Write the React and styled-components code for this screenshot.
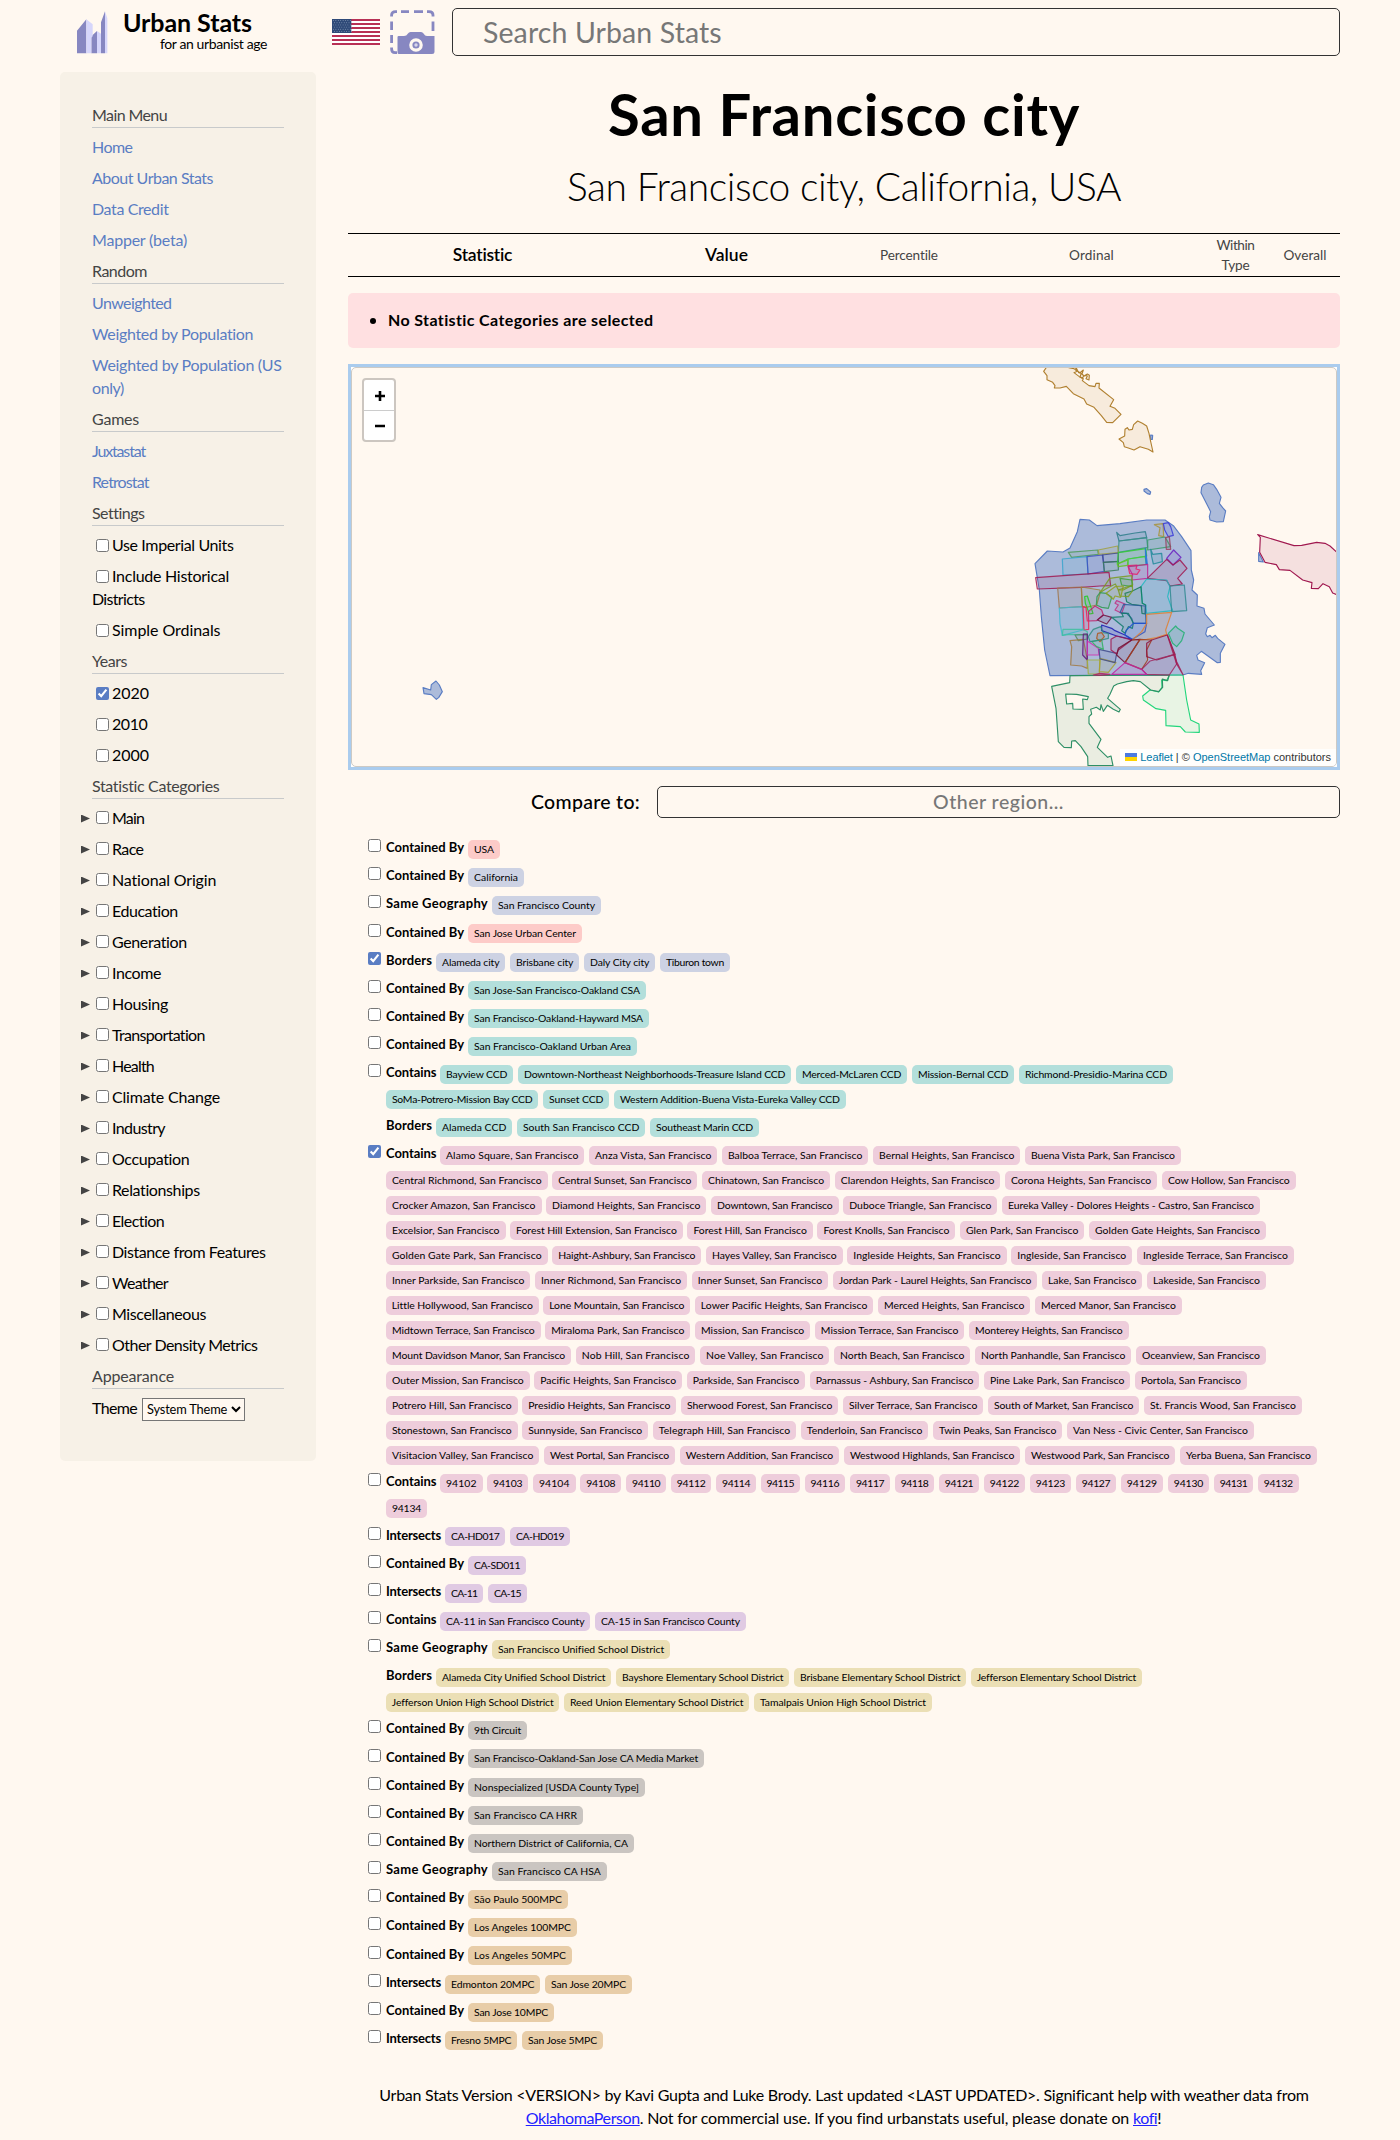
import React, { useLayoutEffect, useRef, useState } from "react";
import styled, { createGlobalStyle } from "styled-components";

const GlobalStyle = createGlobalStyle`
  * { box-sizing: border-box; }
  body {
    margin: 0;
    background: #fff8f0;
    color: #000;
    font-family: Lato, "Open Sans", sans-serif;
    font-size: 16px;
    line-height: 23px;
  }
`;

/* Text tracked so that it fills the given width. */
const Tracked = styled.span`
  display: inline-block;
  white-space: pre;
`;

function Fit({ w, children }) {
  const ref = useRef(null);
  const [spacing, setSpacing] = useState(0);
  useLayoutEffect(() => {
    const el = ref.current;
    el.style.letterSpacing = "0px";
    const natural = el.getBoundingClientRect().width;
    const next = (w - natural) / el.textContent.length;
    el.style.letterSpacing = `${next}px`;
    setSpacing(next);
  }, [w, children]);
  return (
    <Tracked ref={ref} style={{ letterSpacing: `${spacing}px` }}>
      {children}
    </Tracked>
  );
}

const Page = styled.div`
  width: 1280px;
  margin: 0 60px;
  height: 2140px;
  overflow: hidden;
`;

const Header = styled.header`
  display: flex;
  height: 72px;
  padding-top: 8px;
`;

const Brand = styled.div`
  display: flex;
  width: 272px;
  padding: 3px 0 0 16px;
`;

const BrandText = styled.div`
  display: flex;
  flex-direction: column;
  padding-left: 15px;
`;

const BrandName = styled.div`
  font-size: 25px;
  font-weight: 700;
  line-height: 24px;
  margin-top: -1px;
`;

const BrandTag = styled.div`
  font-size: 14px;
  line-height: 16px;
  padding: 2px 0 0 37px;
`;

const FlagBox = styled.div`
  width: 58px;
  padding-top: 11px;
`;

const CameraBox = styled.div`
  width: 62px;
  padding-top: 2px;
`;

const SearchInput = styled.input`
  width: 888px;
  height: 48px;
  border: 1px solid #333;
  border-radius: 5px;
  background: #fff8f0;
  padding: 0 30px;
  font: 400 28.5px Lato, sans-serif;
  letter-spacing: 0.1px;
  &::placeholder { color: #777; }
`;

const Body = styled.div`
  display: flex;
  gap: 32px;
  align-items: flex-start;
`;

const Sidebar = styled.nav`
  width: 256px;
  height: 1389px;
  padding: 27px 32px;
  border-radius: 5px;
  background: #f7f1e7;
`;

const MenuHeading = styled.div`
  margin: 4px 0 3px;
  height: 25px;
  border-bottom: 1px solid #c8cacb;
  color: #444;
`;

const MenuItem = styled.div`
  padding: 4px 0;
  color: ${(p) => (p.$link ? "#5a7dc3" : "#000")};
`;

const Check = styled.input.attrs({ type: "checkbox", readOnly: true })`
  width: 13px;
  height: 13px;
  margin: 3px 3px 3px 4px;
  vertical-align: -1px;
  accent-color: #5a7dc3;
`;

const CategoryRow = styled.div`
  display: flex;
  align-items: center;
  height: 31px;
  margin-left: -11px;
`;

const Triangle = styled.span`
  width: 9px;
  height: 8px;
  margin-right: 2px;
  margin-top: 2px;
  background: #444;
  clip-path: polygon(0 0, 100% 50%, 0 100%);
`;

const ThemeSelect = styled.select`
  width: 103px;
  height: 23px;
  margin-left: 5px;
  padding: 0;
  border: 1px solid #767676;
  border-radius: 0;
  background: #fff8f0;
  color: #000;
  font: 400 12.8px Lato, sans-serif;
  letter-spacing: -0.15px;
`;

const Main = styled.main`
  width: 992px;
`;

const Title = styled.h1`
  margin: 0;
  font-size: 58px;
  font-weight: 700;
  line-height: 83px;
  text-align: center;
`;

const Subtitle = styled.h2`
  margin: 0;
  font-size: 39px;
  font-weight: 300;
  line-height: 63px;
  text-align: center;
`;

const TableHead = styled.div`
  display: grid;
  grid-template-columns: 269px 219px 146px 219px 69px 70px;
  align-items: center;
  height: 44px;
  margin-top: 15px;
  border-top: 1px solid #000;
  border-bottom: 1px solid #000;
  text-align: center;
`;

const HeadCell = styled.div`
  font-size: ${(p) => (p.$major ? 17.5 : 13.6)}px;
  font-weight: ${(p) => (p.$major ? 600 : 400)};
  color: ${(p) => (p.$major ? "#000" : "#444")};
  line-height: 20px;
`;

const Warning = styled.div`
  display: flex;
  align-items: center;
  height: 55px;
  margin-top: 16px;
  padding: 0 0 2px 22px;
  border-radius: 5px;
  background: #ffe0e1;
  font-weight: 700;
`;

const Bullet = styled.span`
  width: 6px;
  height: 6px;
  margin: 2px 12px 0 0;
  border-radius: 50%;
  background: #000;
`;

const MapFrame = styled.div`
  height: 406px;
  margin-top: 16px;
  border: 3px solid #aaccee;
  background: #fff;
`;

const MapCanvas = styled.div`
  position: relative;
  height: 400px;
  border: 1px solid #ccc9c4;
  border-radius: 5px;
  background: #fff8f0;
  overflow: hidden;
`;

const MapSvg = styled.svg`
  display: block;
`;

const ZoomControl = styled.div`
  position: absolute;
  left: 10px;
  top: 10px;
  width: 34px;
  border: 2px solid #ccc6c0;
  border-radius: 4px;
  background: #fff;
`;

const ZoomButton = styled.div`
  height: ${(p) => (p.$first ? 31 : 29)}px;
  padding: ${(p) => (p.$first ? "2px 0 0 1px" : "0 0 0 1px")};
  border-bottom: ${(p) => (p.$first ? "1px solid #ccc" : "0")};
  display: flex;
  align-items: center;
  justify-content: center;
`;

const Attribution = styled.div`
  position: absolute;
  right: 0;
  bottom: -1px;
  height: 18px;
  padding: 0 5px;
  background: rgba(255, 255, 255, 0.8);
  color: #333;
  font: 11px/17px "Liberation Sans", Arial, sans-serif;
  white-space: nowrap;
`;

const MapLink = styled.a`
  color: #0078a8;
`;

const CompareRow = styled.div`
  display: flex;
  align-items: center;
  height: 32px;
  margin-top: 16px;
`;

const CompareLabel = styled.div`
  width: 309px;
  padding: 0 0 2px 183px;
  font-size: 19.5px;
  font-weight: 500;
`;

const CompareInput = styled.input`
  width: 683px;
  height: 32px;
  padding: 0 0 2px;
  border: 1px solid #333;
  border-radius: 5px;
  background: #fff8f0;
  font: 500 19.5px Lato, sans-serif;
  letter-spacing: 0.5px;
  text-align: center;
  &::placeholder { color: #777; }
`;

const Related = styled.div`
  margin-top: 18px;
  padding-left: 20px;
`;

const RelatedRow = styled.div`
  display: flex;
  padding: 3.09px 0;
`;

const CheckCell = styled.div`
  width: 18px;
  height: 13px;
  display: flex;
`;

const RowCheck = styled(Check)`
  margin: 0;
`;

const ChipFlow = styled.div`
  display: flex;
  flex-wrap: wrap;
  gap: 3px 4.6px;
  width: 931.7px;
`;

const Relation = styled.div`
  width: ${(p) => p.$w}px;
  margin-right: -4.6px;
  font-size: 13px;
  font-weight: 700;
  line-height: 17px;
`;

const Chip = styled.a`
  width: ${(p) => p.$w}px;
  height: 19px;
  margin: 0.9px 0 2.1px;
  border-radius: 5px;
  background: ${(p) => p.$bg};
  font-size: 10.4px;
  line-height: 19px;
  text-align: center;
  overflow: hidden;
`;

const Footer = styled.footer`
  margin-top: 28px;
  text-align: center;
`;

const FooterLink = styled.a`
  color: #2222ff;
  & > span { text-decoration: underline; }
`;

const RED = "#fdcbc8";
const BLUE = "#cdd2e3";
const TEAL = "#b3dfdb";
const PINK = "#eecddb";
const PURPLE = "#e0cae3";
const YELLOW = "#ebdfb5";
const GREY = "#cac5c1";
const ORANGE = "#e8cda8";

const RELATIONS = {
  "Contained By": [78, 82],
  "Same Geography": [102, 106],
  Borders: [46, 50],
  Contains: [50.5, 54],
  Intersects: [55, 59],
};

const SF = ", San Francisco";

const NEIGHBORHOODS = [
  ["Alamo Square", 144.4], ["Anza Vista", 128.4], ["Balboa Terrace", 146.4], ["Bernal Heights", 147.4], ["Buena Vista Park", 156],
  ["Central Richmond", 161.6], ["Central Sunset", 145.2], ["Chinatown", 128.1], ["Clarendon Heights", 165.7], ["Corona Heights", 152.4], ["Cow Hollow", 133.7],
  ["Crocker Amazon", 155.5], ["Diamond Heights", 160.3], ["Downtown", 127.7], ["Duboce Triangle", 154.1], ["Eureka Valley - Dolores Heights - Castro", 258],
  ["Excelsior", 119.5], ["Forest Hill Extension", 172.7], ["Forest Hill", 125.5], ["Forest Knolls", 137.9], ["Glen Park", 124.4], ["Golden Gate Heights", 177],
  ["Golden Gate Park", 161.6], ["Haight-Ashbury", 149.1], ["Hayes Valley", 136.8], ["Ingleside Heights", 159.4], ["Ingleside", 121.1], ["Ingleside Terrace", 157],
  ["Inner Parkside", 144.4], ["Inner Richmond", 152.2], ["Inner Sunset", 136.4], ["Jordan Park - Laurel Heights", 204.6], ["Lake", 100.4], ["Lakeside", 119],
  ["Little Hollywood", 152.6], ["Lone Mountain", 147.2], ["Lower Pacific Heights", 178.4], ["Merced Heights", 152.4], ["Merced Manor", 147],
  ["Midtown Terrace", 154.6], ["Miraloma Park", 145.2], ["Mission", 115.3], ["Mission Terrace", 149.5], ["Monterey Heights", 159.7],
  ["Mount Davidson Manor", 185.2], ["Nob Hill", 119.7], ["Noe Valley", 129.4], ["North Beach", 136.3], ["North Panhandle", 156.4], ["Oceanview", 130],
  ["Outer Mission", 143.7], ["Pacific Heights", 147.8], ["Parkside", 118.5], ["Parnassus - Ashbury", 169.6], ["Pine Lake Park", 146.4], ["Portola", 112],
  ["Potrero Hill", 131.6], ["Presidio Heights", 154.2], ["Sherwood Forest", 157.4], ["Silver Terrace", 140.4], ["South of Market", 151.4], ["St. Francis Wood", 158],
  ["Stonestown", 131.6], ["Sunnyside", 126.1], ["Telegraph Hill", 143.4], ["Tenderloin", 127.5], ["Twin Peaks", 129.4], ["Van Ness - Civic Center", 187],
  ["Visitacion Valley", 153.3], ["West Portal", 131.2], ["Western Addition", 159.7], ["Westwood Highlands", 176.4], ["Westwood Park", 150.4], ["Yerba Buena", 137],
].map(([name, w]) => [name + SF, w]);

const ZIPS = [
  ["94102", 42.5], ["94103", 41.3], ["94104", 42.6], ["94108", 41.3], ["94110", 40.1], ["94112", 40.7], ["94114", 40],
  ["94115", 39.4], ["94116", 40.7], ["94117", 40.4], ["94118", 39.4], ["94121", 40.4], ["94122", 41.4], ["94123", 41.4],
  ["94127", 40.4], ["94129", 42.4], ["94130", 41.4], ["94131", 39.4], ["94132", 41], ["94134", 41],
];

const ROWS = [
  ["Contained By", RED, [["USA", 32]]],
  ["Contained By", BLUE, [["California", 56]]],
  ["Same Geography", BLUE, [["San Francisco County", 109]]],
  ["Contained By", RED, [["San Jose Urban Center", 114]]],
  ["Borders", BLUE, [["Alameda city", 69.4], ["Brisbane city", 69.4], ["Daly City city", 71.4], ["Tiburon town", 70]], "on"],
  ["Contained By", TEAL, [["San Jose-San Francisco-Oakland CSA", 178]]],
  ["Contained By", TEAL, [["San Francisco-Oakland-Hayward MSA", 181]]],
  ["Contained By", TEAL, [["San Francisco-Oakland Urban Area", 169]]],
  ["Contains", TEAL, [
    ["Bayview CCD", 73.4], ["Downtown-Northeast Neighborhoods-Treasure Island CCD", 273.4], ["Merced-McLaren CCD", 111.4],
    ["Mission-Bernal CCD", 102.4], ["Richmond-Presidio-Marina CCD", 154], ["SoMa-Potrero-Mission Bay CCD", 152.4],
    ["Sunset CCD", 66.4], ["Western Addition-Buena Vista-Eureka Valley CCD", 232],
  ]],
  ["Borders", TEAL, [["Alameda CCD", 76.4], ["South San Francisco CCD", 128.4], ["Southeast Marin CCD", 109]], "none"],
  ["Contains", PINK, NEIGHBORHOODS, "on"],
  ["Contains", PINK, ZIPS],
  ["Intersects", PURPLE, [["CA-HD017", 60.4], ["CA-HD019", 60]]],
  ["Contained By", PURPLE, [["CA-SD011", 58]]],
  ["Intersects", PURPLE, [["CA-11", 38.4], ["CA-15", 39]]],
  ["Contains", PURPLE, [["CA-11 in San Francisco County", 150.4], ["CA-15 in San Francisco County", 151]]],
  ["Same Geography", YELLOW, [["San Francisco Unified School District", 178]]],
  ["Borders", YELLOW, [
    ["Alameda City Unified School District", 175.4], ["Bayshore Elementary School District", 173.4],
    ["Brisbane Elementary School District", 172.4], ["Jefferson Elementary School District", 171],
    ["Jefferson Union High School District", 173.4], ["Reed Union Elementary School District", 185.4],
    ["Tamalpais Union High School District", 178],
  ], "none"],
  ["Contained By", GREY, [["9th Circuit", 59]]],
  ["Contained By", GREY, [["San Francisco-Oakland-San Jose CA Media Market", 236]]],
  ["Contained By", GREY, [["Nonspecialized [USDA County Type]", 177]]],
  ["Contained By", GREY, [["San Francisco CA HRR", 115]]],
  ["Contained By", GREY, [["Northern District of California, CA", 166]]],
  ["Same Geography", GREY, [["San Francisco CA HSA", 115]]],
  ["Contained By", ORANGE, [["São Paulo 500MPC", 100]]],
  ["Contained By", ORANGE, [["Los Angeles 100MPC", 109]]],
  ["Contained By", ORANGE, [["Los Angeles 50MPC", 104]]],
  ["Intersects", ORANGE, [["Edmonton 20MPC", 95.4], ["San Jose 20MPC", 87]]],
  ["Contained By", ORANGE, [["San Jose 10MPC", 86]]],
  ["Intersects", ORANGE, [["Fresno 5MPC", 72.4], ["San Jose 5MPC", 81]]],
];

const MENU = [
  ["Main Menu", 75, [["Home", 40.5], ["About Urban Stats", 121], ["Data Credit", 76.5], ["Mapper (beta)", 95]]],
  ["Random", 55, [["Unweighted", 79.5], ["Weighted by Population", 161.5], ["Weighted by Population (US", 190, "only)", 32]]],
  ["Games", 47, [["Juxtastat", 53], ["Retrostat", 56.5]]],
];

const SETTINGS = [
  ["Settings", 52, [["Use Imperial Units", 121.5], ["Include Historical", 117, "Districts", 52.5], ["Simple Ordinals", 108.5]]],
  ["Years", 35, [["2020", 37], ["2010", 35.5], ["2000", 37]]],
];

const CATEGORIES = [
  ["Main", 32], ["Race", 31.5], ["National Origin", 104.5], ["Education", 66], ["Generation", 75], ["Income", 49],
  ["Housing", 56], ["Transportation", 93], ["Health", 42], ["Climate Change", 108], ["Industry", 53], ["Occupation", 77.5],
  ["Relationships", 88], ["Election", 52.5], ["Distance from Features", 153.5], ["Weather", 56], ["Miscellaneous", 94],
  ["Other Density Metrics", 145.5],
];

/* Map outlines, drawn three units to the pixel. */
const CITY = [
  "240,478 268,480 291,497 360,491 440,480 495,480 520,497 545,530 573,572 574,630 581,660 576,690 592,705 591,738 612,745 615,762 643,795 622,803 617,822 622,830 630,826 636,833 646,826 653,835 675,853 661,880 661,907 652,908 604,874 590,886 594,900 614,908 602,932 605,943 565,940 549,945 150,947 134,870 124,770 118,690 105,611 142,573 189,576 210,564 232,515",
  "610,375 625,369 640,374 650,388 663,412 658,430 668,443 677,453 670,485 650,486 630,480 628,470 632,455 603,398 605,382",
  "432,388 440,386 452,396 450,403 442,401 432,393",
  "452,225 458,226 457,238 452,238",
  "776,578 790,606 776,604",
  "-1731,983 -1728,1001 -1706,1004 -1691,1018 -1684,1013 -1673,995 -1682,975 -1692,963 -1706,974 -1708,990",
];

const NEIGHBORS = [
  ["#b08030", "142,18 131,34 141,47 141,59 158,67 165,77 163,84 180,84 199,79 220,101 252,117 260,132 282,142 304,167 320,187 338,188 363,163 345,145 330,139 341,119 297,84 298,70 288,70 285,80 267,77 247,62 250,56 238,50 222,38 232,34 222,26 210,24 190,18"],
  ["#b08030", "226,18 228,30 240,38 250,30 246,42 252,48 262,42 268,46 267,60 258,56 262,48 255,46 246,54 240,50 244,40 236,38"],
  ["#b08030", "413,183 427,190 440,198 447,220 451,240 459,276 445,268 420,260 402,270 385,264 373,260 370,248 357,237 374,228 375,208 382,203 387,210 397,208 401,194"],
  ["#a0184f", "773,524 882,557 905,556 950,547 975,550 990,558 1010,576 1010,704 998,699 988,680 969,671 955,686 934,685 936,668 908,660 870,631 838,629 829,614 795,607 779,577 781,532"],
  ["#22d67c", "549,945 560,1020 572,1080 597,1092 598,1117 556,1116 541,1100 498,1097 497,1051 468,1046 430,1020 428,1008 450,990 476,996 486,982 485,960 500,962 508,945"],
];

const DALY_CITY =
  "M210,947L508,945 503,962 487,957 488,982 476,995 452,990 421,965 400,962 380,965 352,972 341,978 330,1003 323,1015 340,1030 361,1048 357,1056 340,1048 322,1036 310,1054 303,1034 301,1050 289,1042 272,1048 275,1062 267,1070 267,1090 303,1138 292,1162 323,1192 333,1188 339,1217 264,1217 263,1190 243,1160 226,1142 215,1143 214,1163 192,1162 175,1145 168,1045 155,979 209,968ZM197,1002L230,1003 265,1010 262,1019 248,1017 250,1048 219,1047 218,1030 200,1032Z";

const DISTRICTS = [
  ["#2d7d8a", "350,517 360,527 405,519 436,515 440,533 357,543"],
  ["#3a8f8a", "357,543 440,533 443,562 355,577"],
  ["#a8923a", "463,494 489,491 491,530 476,527 480,503"],
  ["#3a3ad8", "490,491 505,488 512,500 520,526 505,530 494,510"],
  ["#3a9a6a", "443,540 495,531 512,560 443,570"],
  ["#9a4060", "497,533 508,530 512,568 499,568"],
  ["#4f9a5a", "205,577 293,570 295,583 215,592"],
  ["#a0a040", "295,570 353,558 355,578 297,583"],
  ["#3aa5cc", "187,597 261,590 264,642 189,645"],
  ["#4050c0", "261,590 309,585 313,634 264,642"],
  ["#404a90", "307,585 355,579 355,604 310,607"],
  ["#3a7a5a", "310,607 355,604 355,630 313,635"],
  ["#33cc33", "355,578 438,566 440,588 384,597 352,612"],
  ["#66c020", "352,612 384,600 382,616 355,620"],
  ["#44cc44", "384,597 435,590 440,613 385,620"],
  ["#f02060", "384,617 411,615 408,627 420,630 411,643 389,641"],
  ["#208a9a", "452,568 458,583 485,580 487,605 460,612 455,590"],
  ["#2070e0", "436,566 438,612 442,612"],
  ["#c02090", "385,620 443,613 443,655 395,660 398,645"],
  ["#6a20c0", "521,570 543,592 519,615 500,595"],
  ["#a01850", "500,598 519,615 540,600 561,625 533,655 547,672 510,678 500,662 442,655"],
  ["#a01850", "107,653 327,637 332,677 300,678 245,682 112,687"],
  ["#a07850", "173,684 244,681 247,740 178,744"],
  ["#40b8d0", "178,744 247,740 249,810 187,826 180,790"],
  ["#a08040", "244,681 300,690 300,700 290,735 258,742 247,740"],
  ["#7a9a20", "329,655 350,652 395,647 398,675 370,690 355,690 346,672 316,688 300,698"],
  ["#40a040", "360,655 395,660 397,680 365,675"],
  ["#20b8c0", "423,680 440,657 500,660 510,680 503,710 518,752 440,760 437,735 427,730"],
  ["#308a90", "510,678 553,675 560,752 515,755"],
  ["#107a5a", "423,680 427,730 437,735 435,762 426,760 424,737 395,733 380,725 375,700 397,693"],
  ["#20cc20", "254,710 262,708 279,760 268,762 256,730"],
  ["#309a50", "300,698 318,700 335,712 325,745 305,742 289,735 291,710"],
  ["#90a020", "318,700 345,680 370,678 362,712 345,708 340,718"],
  ["#7a9a20", "355,690 397,675 398,692 385,710 360,708"],
  ["#c03080", "350,722 345,730 355,735 345,750 365,760 375,732"],
  ["#2a5a9a", "371,733 436,738 438,790 400,790 395,775 380,760 360,758"],
  ["#c0206a", "265,755 285,738 305,750 310,765 290,782 266,783"],
  ["#701040", "292,780 310,765 335,772 320,792"],
  ["#f02050", "249,740 258,742 262,783 266,783 266,808 252,810"],
  ["#107a6a", "335,772 370,770 365,760 385,760 400,790 397,805 385,800 375,820 365,812 370,800"],
  ["#1a1ab0", "305,795 335,805 345,812 375,825 395,838 350,828 305,812"],
  ["#2050d0", "400,790 440,790 435,815 397,838 375,825 378,812"],
  ["#e08030", "440,763 515,757 497,810 500,823 470,833 440,838 397,840 425,815 440,790"],
  ["#20b070", "527,798 533,805 553,818 545,842 530,860 518,850 505,820"],
  ["#40c0a0", "187,826 189,808 249,808 262,815 262,825 210,823"],
  ["#508a60", "225,825 262,823 262,837 235,842"],
  ["#a07840", "210,842 250,838 262,900 262,925 245,918 212,915 215,860"],
  ["#601880", "250,822 262,822 262,900 248,885"],
  ["#d030b0", "262,843 295,865 297,885 262,885"],
  ["#a0b040", "262,900 300,900 298,942 265,942"],
  ["#a8a030", "300,895 348,908 325,937 298,935"],
  ["#404a8a", "297,868 350,880 345,908 300,897"],
  ["#30b060", "275,845 305,838 310,868 290,860"],
  ["#c05010", "293,820 305,818 313,830 300,845 290,835"],
  ["#308a80", "265,830 280,808 302,800 310,818 325,820 325,835 305,840 270,845"],
  ["#a01850", "333,838 350,828 395,840 355,870 350,882 333,870"],
  ["#701030", "395,840 420,838 375,908 350,885 355,865"],
  ["#a04020", "420,838 455,840 440,870 443,900 425,928 375,908"],
  ["#901840", "455,840 502,825 525,883 470,900 440,890 440,850"],
  ["#a02860", "425,928 450,903 525,883 530,912 508,945 440,943"],
  ["#c020a0", "335,943 375,908 425,928 440,943"],
  ["#a01850", "502,825 530,905 549,944 530,912"],
  ["#b02060", "280,945 300,940 330,943 300,946"],
];

function CityMap() {
  return (
    <MapSvg width="984" height="398" viewBox="0 0 984 398">
      <g transform="translate(648 -8) scale(0.33333)" strokeWidth="3.4" strokeLinejoin="round">
        {CITY.map((p) => (
          <polygon key={p} points={p} fill="#5a7dc3" fillOpacity="0.5" stroke="#5a7dc3" />
        ))}
        {NEIGHBORS.map(([c, p]) => (
          <polygon key={p} points={p} fill={c} fillOpacity="0.1" stroke={c} />
        ))}
        <path d={DALY_CITY} fill="#2e8f66" fillOpacity="0.1" fillRule="evenodd" stroke="#2e8f66" />
        {DISTRICTS.map(([c, p]) => (
          <polygon key={p} points={p} fill={c} fillOpacity="0.12" stroke={c} strokeOpacity="0.85" strokeWidth="3.6" />
        ))}
      </g>
    </MapSvg>
  );
}

function Logo() {
  return (
    <svg width="32" height="43" viewBox="0 0 96 129">
      <path d="M3,59L31,25V127H3Z M46,76L63,60V127H46Z M75,34L87,1V127H75Z" fill="#8787c1" />
      <path d="M31,25L50,40V76L46,80V127H31Z M63,60L75,68V127H63Z M87,1L94,22V127H87Z" fill="#d6d6fb" />
    </svg>
  );
}

function Flag() {
  const stars = [];
  for (let r = 0; r < 6; r++) {
    for (let c = 0; c < 8; c++) stars.push([1.5 + c * 2.4 + (r % 2) * 1.1, 1.5 + r * 2.2]);
  }
  return (
    <svg width="48" height="26" viewBox="0 0 48 26">
      <rect width="48" height="26" fill="#fff" />
      {[0, 1, 2, 3, 4, 5, 6].map((i) => (
        <rect key={i} y={i * 4} width="48" height="2" fill="#b83055" />
      ))}
      <rect width="19.3" height="14" fill="#2f4a78" />
      {stars.map(([x, y]) => (
        <circle key={`${x}-${y}`} cx={x} cy={y} r="0.45" fill="#a9bbd0" />
      ))}
    </svg>
  );
}

function Camera() {
  return (
    <svg width="45" height="45" viewBox="0 0 45 45" fill="none">
      <g stroke="#8787c1" strokeWidth="2.8">
        <path d="M1.6,6.5V5Q1.6,1.6 5.5,1.6H7 M11,1.6H19 M24,1.6H33 M37,1.6H39Q43,1.6 43,5V6.5" />
        <path d="M1.6,11.5V20 M1.6,25V33 M43,11.5V21 M1.6,37.5V39Q1.6,42.6 5,42.6H7" />
      </g>
      <path
        d="M7.5,27Q7.5,26 8.7,26H14Q16.5,26 18,23.5Q18.8,22 20.5,22H31Q32.7,22 33.5,23.5Q35,26 37,26H44.5V41.5Q44.5,44 42,44H9Q7.5,44 7.5,42.5Z"
        fill="#8787c1"
      />
      <circle cx="26" cy="35" r="5.2" fill="#8787c1" stroke="#fff8f0" strokeWidth="3.2" />
      <circle cx="26" cy="35" r="1.7" fill="#d9d6ea" />
    </svg>
  );
}

function SidebarMenu() {
  return (
    <Sidebar>
      {MENU.map(([title, w, items]) => (
        <React.Fragment key={title}>
          <MenuHeading><Fit w={w}>{title}</Fit></MenuHeading>
          {items.map(([text, tw, more, mw]) => (
            <MenuItem key={text} $link>
              <Fit w={tw}>{text}</Fit>
              {more && <><br /><Fit w={mw}>{more}</Fit></>}
            </MenuItem>
          ))}
        </React.Fragment>
      ))}
      {SETTINGS.map(([title, w, items]) => (
        <React.Fragment key={title}>
          <MenuHeading><Fit w={w}>{title}</Fit></MenuHeading>
          {items.map(([text, tw, more, mw]) => (
            <MenuItem key={text}>
              <Check defaultChecked={text === "2020"} />
              <Fit w={tw}>{text}</Fit>
              {more && <><br /><Fit w={mw}>{more}</Fit></>}
            </MenuItem>
          ))}
        </React.Fragment>
      ))}
      <MenuHeading><Fit w={128}>Statistic Categories</Fit></MenuHeading>
      {CATEGORIES.map(([text, w]) => (
        <CategoryRow key={text}>
          <Triangle />
          <Check />
          <Fit w={w}>{text}</Fit>
        </CategoryRow>
      ))}
      <MenuHeading><Fit w={82}>Appearance</Fit></MenuHeading>
      <MenuItem>
        <Fit w={45}>Theme</Fit>
        <ThemeSelect defaultValue="s"><option value="s">System Theme</option></ThemeSelect>
      </MenuItem>
    </Sidebar>
  );
}

function RelatedRegions() {
  return (
    <Related>
      {ROWS.map(([relation, color, chips, state], i) => (
        <RelatedRow key={i}>
          <CheckCell>{state !== "none" && <RowCheck defaultChecked={state === "on"} />}</CheckCell>
          <ChipFlow>
            <Relation $w={RELATIONS[relation][1]}>
              <Fit w={RELATIONS[relation][0]}>{relation}</Fit>
            </Relation>
            {chips.map(([name, w]) => (
              <Chip key={name} $w={w} $bg={color}>
                <Fit w={w - 12}>{name}</Fit>
              </Chip>
            ))}
          </ChipFlow>
        </RelatedRow>
      ))}
    </Related>
  );
}

export default function App() {
  return (
    <Page>
      <GlobalStyle />
      <Header>
        <Brand>
          <Logo />
          <BrandText>
            <BrandName><Fit w={129}>Urban Stats</Fit></BrandName>
            <BrandTag><Fit w={107}>for an urbanist age</Fit></BrandTag>
          </BrandText>
        </Brand>
        <FlagBox><Flag /></FlagBox>
        <CameraBox><Camera /></CameraBox>
        <SearchInput placeholder="Search Urban Stats" />
      </Header>
      <Body>
        <SidebarMenu />
        <Main>
          <Title><Fit w={472}>San Francisco city</Fit></Title>
          <Subtitle><Fit w={554}>San Francisco city, California, USA</Fit></Subtitle>
          <TableHead>
            <HeadCell $major><Fit w={60}>Statistic</Fit></HeadCell>
            <HeadCell $major><Fit w={43}>Value</Fit></HeadCell>
            <HeadCell><Fit w={58}>Percentile</Fit></HeadCell>
            <HeadCell><Fit w={45}>Ordinal</Fit></HeadCell>
            <HeadCell><Fit w={38}>Within</Fit><br /><Fit w={28}>Type</Fit></HeadCell>
            <HeadCell><Fit w={43}>Overall</Fit></HeadCell>
          </TableHead>
          <Warning><Bullet /><Fit w={266}>No Statistic Categories are selected</Fit></Warning>
          <MapFrame>
            <MapCanvas>
              <CityMap />
              <ZoomControl>
                <ZoomButton $first>
                  <svg width="12" height="12"><path d="M1,6H11M6,1V11" stroke="#000" strokeWidth="2.6" /></svg>
                </ZoomButton>
                <ZoomButton>
                  <svg width="12" height="12"><path d="M1,6H11" stroke="#000" strokeWidth="2.6" /></svg>
                </ZoomButton>
              </ZoomControl>
              <Attribution>
                <svg width="12" height="8"><rect width="12" height="4" fill="#4c7be1" /><rect y="4" width="12" height="4" fill="#ffd500" /></svg>
                {" "}<MapLink><Fit w={32.5}>Leaflet</Fit></MapLink> | © <MapLink><Fit w={77.5}>OpenStreetMap</Fit></MapLink>{" "}<Fit w={57.5}>contributors</Fit>
              </Attribution>
            </MapCanvas>
          </MapFrame>
          <CompareRow>
            <CompareLabel><Fit w={109}>Compare to:</Fit></CompareLabel>
            <CompareInput placeholder="Other region..." />
          </CompareRow>
          <RelatedRegions />
          <Footer>
            <Fit w={929}>{"Urban Stats Version <VERSION> by Kavi Gupta and Luke Brody. Last updated <LAST UPDATED>. Significant help with weather data from"}</Fit>
            <br />
            <FooterLink><Fit w={114}>OklahomaPerson</Fit></FooterLink>
            <Fit w={493}>{". Not for commercial use. If you find urbanstats useful, please donate on "}</Fit>
            <FooterLink><Fit w={24}>kofi</Fit></FooterLink>
            <Fit w={5}>!</Fit>
          </Footer>
        </Main>
      </Body>
    </Page>
  );
}
